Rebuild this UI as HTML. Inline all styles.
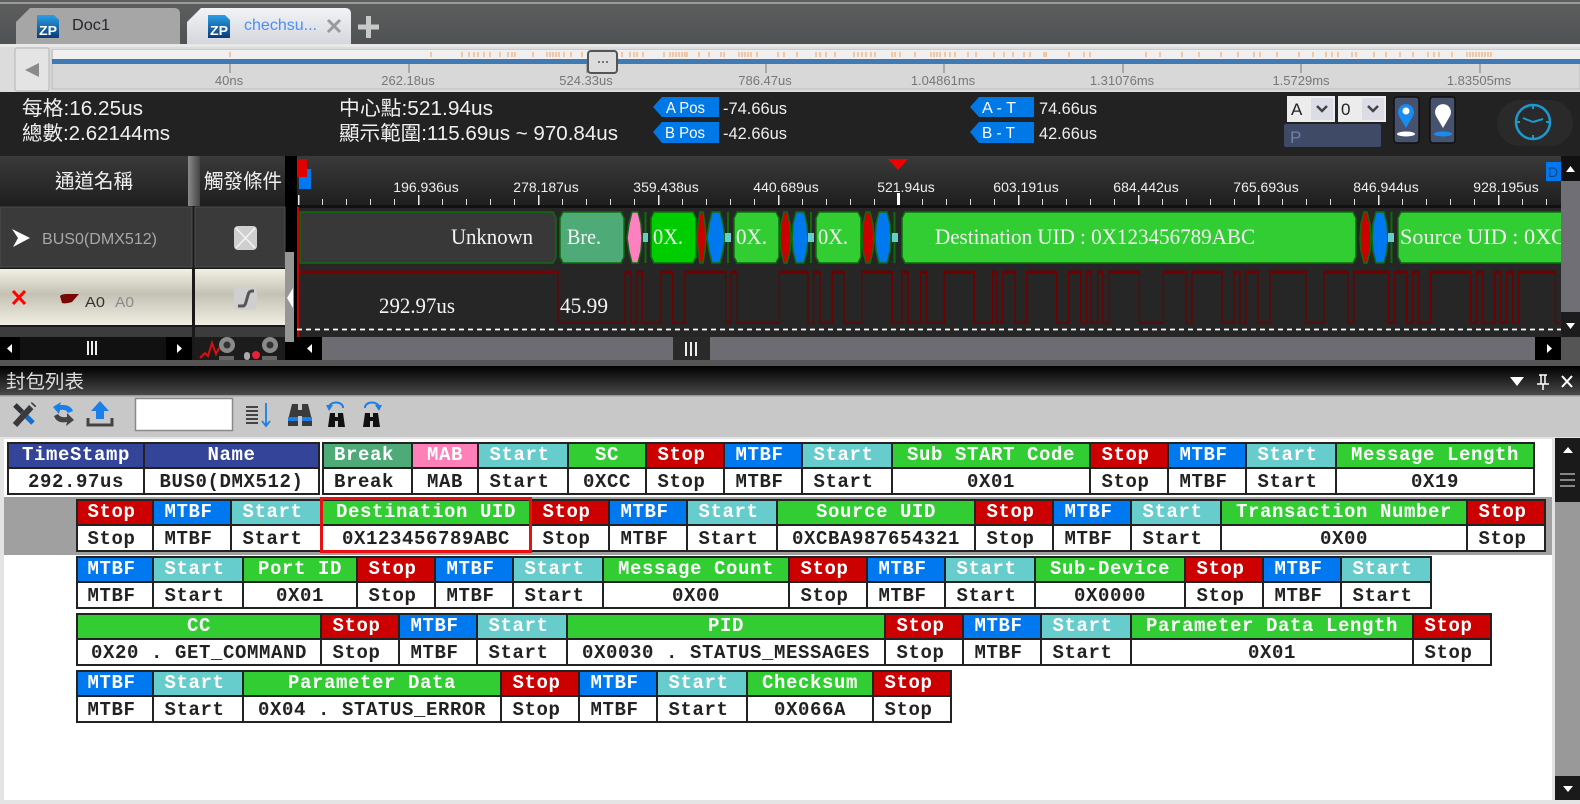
<!DOCTYPE html>
<html><head><meta charset="utf-8"><style>
html,body{margin:0;padding:0;width:1580px;height:804px;overflow:hidden;background:#fff}
svg{position:absolute;left:0;top:0}
text{font-family:"Liberation Sans","Noto Sans CJK TC",sans-serif}
.cn{font-size:20px;fill:#f0f0f0}
.se{font-family:"Liberation Serif",serif;font-size:22px;fill:#f4f4f4}
.ov{font-size:13px;fill:#777;text-anchor:middle}
.ru{font-size:14px;fill:#eee;text-anchor:middle}
.v{font-size:17px;fill:#eee}
.tg{font-size:16px;fill:#fff}
.row{position:absolute;height:53px;box-sizing:border-box;border:2px solid #222;border-right:0;font:bold 19px "Liberation Mono",monospace;letter-spacing:.6px;white-space:nowrap}
.c{float:left;height:49px;box-sizing:border-box;border-right:2px solid #222;background:#fff}
.c b,.c i{display:block;box-sizing:border-box;text-align:center;font-style:normal;font-weight:bold;height:24px;line-height:27px;color:#222}
.c b{height:25px;line-height:23px;border-bottom:2px solid #222;color:#fff}
.g{background:#32cd32}.r{background:#cc0000}.u{background:#0078f0}.t{background:#66cccc}.n{background:#334499}.k{background:#4eab78}.p{background:#ff80b8}
.c b.r,.c b.u,.c b.t,.c b.k,.c b.r+i,.c b.u+i,.c b.t+i,.c b.k+i{padding-right:7px}
</style></head><body>
<svg width="1580" height="804" viewBox="0 0 1580 804">
<defs>
<linearGradient id="top" x1="0" y1="0" x2="0" y2="1"><stop offset="0" stop-color="#5e5e5e"/><stop offset="1" stop-color="#4e5254"/></linearGradient>
<linearGradient id="tab" x1="0" y1="0" x2="0" y2="1"><stop offset="0" stop-color="#f2f3f6"/><stop offset="1" stop-color="#d4d6dc"/></linearGradient>
<linearGradient id="zp" x1="0" y1="0" x2="0" y2="1"><stop offset="0" stop-color="#2a9fe8"/><stop offset="1" stop-color="#0c3a7a"/></linearGradient>
<linearGradient id="hd" x1="0" y1="0" x2="0" y2="1"><stop offset="0" stop-color="#3a3a3a"/><stop offset="1" stop-color="#1e1e1e"/></linearGradient>
<linearGradient id="cream" x1="0" y1="0" x2="0" y2="1"><stop offset="0" stop-color="#f2f0e4"/><stop offset=".45" stop-color="#c4c2b4"/><stop offset="1" stop-color="#f0eee2"/></linearGradient>
<linearGradient id="pn" x1="0" y1="0" x2="0" y2="1"><stop offset="0" stop-color="#000"/><stop offset="1" stop-color="#4c4c4c"/></linearGradient>
<linearGradient id="spl" x1="0" y1="0" x2="1" y2="0"><stop offset="0" stop-color="#8a8a8a"/><stop offset="1" stop-color="#444"/></linearGradient>
<pattern id="mn" x="298" y="0" width="24" height="10" patternUnits="userSpaceOnUse"><rect width="1" height="10" fill="#ddd"/></pattern>
<pattern id="mj" x="298" y="0" width="120" height="14" patternUnits="userSpaceOnUse"><rect width="1.5" height="14" fill="#eee"/></pattern>
<clipPath id="bus"><rect x="297" y="208" width="1264" height="60"/></clipPath>
</defs>

<!-- title bar -->
<rect width="1580" height="46" fill="url(#top)"/>
<rect y="2" width="1580" height="2" fill="#9a9a9a"/>
<path d="M16 45V22L30 8H174Q180 8 180 14V45Z" fill="#a6a6a6"/>
<path d="M187 45V22L201 8H345Q351 8 351 14V45Z" fill="url(#tab)"/>
<path d="M37 15H54L59 20V38H37Z" fill="url(#zp)"/><text x="39" y="35" font-size="13" font-weight="bold" fill="#fff" textLength="18" lengthAdjust="spacingAndGlyphs">ZP</text>
<path d="M208 15H225L230 20V38H208Z" fill="url(#zp)"/><text x="210" y="35" font-size="13" font-weight="bold" fill="#fff" textLength="18" lengthAdjust="spacingAndGlyphs">ZP</text>
<text x="72" y="30" font-size="16" fill="#2a2430" textLength="38" lengthAdjust="spacingAndGlyphs">Doc1</text>
<text x="244" y="30" font-size="16" fill="#4a90f8" textLength="73" lengthAdjust="spacingAndGlyphs">chechsu...</text>
<path d="M328 20L340 32M340 20L328 32" stroke="#9a9a9a" stroke-width="3"/>
<path d="M368.500 16V38M358 27H379" stroke="#c8c8c8" stroke-width="5"/>

<!-- overview -->
<rect y="44" width="1580" height="49" fill="#dcdcdc"/>
<rect y="44" width="1580" height="3" fill="#e8e8e8"/>
<rect x="15" y="48" width="34" height="43" rx="2" fill="#e4e4e4" stroke="#b4b4b4"/>
<path d="M25 70L39 63V77Z" fill="#8a8a8a"/>
<rect x="52" y="50" width="1528" height="39" fill="#d8d8d8" stroke="#bbb"/>
<rect x="53" y="50" width="1527" height="9" fill="#f0f0f0"/>
<rect x="52" y="59" width="1528" height="5" fill="#3f7ab5"/>
<path d="M230 52v5M431 52v5M462 52v5M469 52v5M474 52v5M478 52v5M484 52v5M490 52v5M500 52v5M508 52v5M512 52v5M515 52v5M533 52v5M547 52v5M550 52v5M553 52v5M556 52v5M559 52v5M564 52v5M571 52v5M582 52v5M622 52v5M630 52v5M634 52v5M637 52v5M643 52v5M664 52v5M670 52v5M673 52v5M676 52v5M679 52v5M682 52v5M685 52v5M687 52v5M699 52v5M709 52v5M721 52v5M724 52v5M739 52v5M742 52v5M745 52v5M748 52v5M751 52v5M757 52v5M778 52v5M784 52v5M797 52v5M816 52v5M820 52v5M826 52v5M835 52v5M854 52v5M858 52v5M862 52v5M866 52v5M871 52v5M875 52v5M892 52v5M895 52v5M900 52v5M915 52v5M931 52v5M934 52v5M937 52v5M940 52v5M945 52v5M950 52v5M955 52v5M968 52v5M976 52v5M994 52v5M1004 52v5M1013 52v5M1024 52v5M1030 52v5M1044 52v5M1046 52v5M1069 52v5M1084 52v5M1090 52v5M1146 52v5M1160 52v5M1182 52v5M1199 52v5M1221 52v5M1238 52v5M1254 52v5M1260 52v5M1277 52v5M1299 52v5M1313 52v5M1326 52v5M1332 52v5M1338 52v5M1352 52v5M1356 52v5M1374 52v5M1386 52v5M1400 52v5M1413 52v5M1428 52v5M1434 52v5M1439 52v5M1452 52v5M1467 52v5M1470 52v5M1473 52v5M1476 52v5M1479 52v5M1482 52v5M1485 52v5M1488 52v5M1491 52v5" stroke="#f0a060" stroke-width="1"/>
<path d="M230 64v9M409 64v9M587 64v9M766 64v9M944 64v9M1123 64v9M1301 64v9M1480 64v9" stroke="#777"/>
<text class="ov" x="229" y="85">40ns</text><text class="ov" x="408" y="85">262.18us</text><text class="ov" x="586" y="85">524.33us</text><text class="ov" x="765" y="85">786.47us</text><text class="ov" x="943" y="85">1.04861ms</text><text class="ov" x="1122" y="85">1.31076ms</text><text class="ov" x="1301" y="85">1.5729ms</text><text class="ov" x="1479" y="85">1.83505ms</text>
<rect x="588" y="51" width="29" height="22" rx="3" fill="#dcdcdc" stroke="#555" stroke-width="2"/>
<path d="M598 62h2M602 62h2M606 62h2" stroke="#555" stroke-width="1.5"/>

<!-- info bar -->
<rect y="92" width="1580" height="64" fill="#222"/>
<text class="cn" x="22" y="115" textLength="121" lengthAdjust="spacingAndGlyphs">每格:16.25us</text>
<text class="cn" x="22" y="140" textLength="148" lengthAdjust="spacingAndGlyphs">總數:2.62144ms</text>
<text class="cn" x="339" y="115" textLength="154" lengthAdjust="spacingAndGlyphs">中心點:521.94us</text>
<text class="cn" x="339" y="140" textLength="279" lengthAdjust="spacingAndGlyphs">顯示範圍:115.69us ~ 970.84us</text>
<path d="M653 107L662 97H719V117H662Z" fill="#0078e6"/><path d="M653 132L662 122H719V143H662Z" fill="#0078e6"/>
<path d="M970 107L979 97H1034V117H979Z" fill="#0078e6"/><path d="M970 132L979 122H1034V143H979Z" fill="#0078e6"/>
<text class="tg" x="666" y="113" textLength="39" lengthAdjust="spacingAndGlyphs">A Pos</text>
<text class="tg" x="665" y="138" textLength="40" lengthAdjust="spacingAndGlyphs">B Pos</text>
<text class="tg" x="982" y="113" textLength="34" lengthAdjust="spacingAndGlyphs">A - T</text>
<text class="tg" x="982" y="138" textLength="33" lengthAdjust="spacingAndGlyphs">B - T</text>
<text class="v" x="723" y="114" textLength="64" lengthAdjust="spacingAndGlyphs">-74.66us</text>
<text class="v" x="723" y="139" textLength="64" lengthAdjust="spacingAndGlyphs">-42.66us</text>
<text class="v" x="1039" y="114" textLength="58" lengthAdjust="spacingAndGlyphs">74.66us</text>
<text class="v" x="1039" y="139" textLength="58" lengthAdjust="spacingAndGlyphs">42.66us</text>
<rect x="1287" y="96" width="48" height="26" fill="#ececec"/><rect x="1311" y="98" width="22" height="22" fill="#dcdce6"/>
<rect x="1338" y="96" width="48" height="26" fill="#ececec"/><rect x="1362" y="98" width="22" height="22" fill="#dcdce6"/>
<text x="1291" y="115" font-size="17" fill="#222">A</text><text x="1341" y="115" font-size="17" fill="#222">0</text>
<path d="M1317 106l5 5l5-5M1368 106l5 5l5-5" fill="none" stroke="#444" stroke-width="2.5"/>
<rect x="1284" y="124" width="97" height="23" rx="2" fill="#3e4a66"/>
<text x="1290" y="143" font-size="17" fill="#6d82a8">P</text>
<rect x="1394" y="97" width="25" height="46" rx="3" fill="#46526e" stroke="#101010" stroke-width="1.500"/>
<rect x="1430" y="97" width="25" height="46" rx="3" fill="#46526e" stroke="#101010" stroke-width="1.500"/>
<path d="M1406 128L1399 116A8 8 0 1 1 1413 116Z" fill="#1a8cf0"/><circle cx="1406" cy="111" r="3.500" fill="#fff"/><ellipse cx="1406" cy="134" rx="9" ry="2.500" fill="#fff"/>
<path d="M1443 128L1436 116A8 8 0 1 1 1450 116Z" fill="#fff"/><ellipse cx="1443" cy="134" rx="9" ry="2.500" fill="#1a8cf0"/>
<rect x="1497" y="100" width="76" height="46" rx="23" fill="#2a2a2a"/>
<circle cx="1533" cy="122" r="17" fill="none" stroke="#1c9ad0" stroke-width="2.5"/>
<path d="M1533 122L1523 118M1533 122L1543 119M1533 105v4M1533 135v4M1516 122h4M1546 122h4" stroke="#1c9ad0" stroke-width="2" fill="none"/>

<!-- channel header / ruler -->
<rect y="156" width="1580" height="51" fill="url(#hd)"/>
<rect x="188" y="156" width="12" height="50" fill="url(#spl)"/>
<text class="cn" x="55" y="188" textLength="78" lengthAdjust="spacingAndGlyphs">通道名稱</text>
<text class="cn" x="204" y="188" textLength="78" lengthAdjust="spacingAndGlyphs">觸發條件</text>
<rect x="285" y="156" width="12" height="204" fill="#000"/>
<rect x="298" y="199" width="1263" height="6" fill="url(#mn)"/>
<rect x="298" y="195" width="1263" height="11" fill="url(#mj)"/>
<rect x="897" y="193" width="3" height="13" fill="#fff"/>
<text class="ru" x="426" y="192">196.936us</text><text class="ru" x="546" y="192">278.187us</text><text class="ru" x="666" y="192">359.438us</text><text class="ru" x="786" y="192">440.689us</text><text class="ru" x="906" y="192">521.94us</text><text class="ru" x="1026" y="192">603.191us</text><text class="ru" x="1146" y="192">684.442us</text><text class="ru" x="1266" y="192">765.693us</text><text class="ru" x="1386" y="192">846.944us</text><text class="ru" x="1506" y="192">928.195us</text>
<path d="M888 159H908L898 170Z" fill="#f00000"/>
<rect x="299" y="169" width="12" height="20" fill="#0078f0"/><rect x="297" y="159" width="10" height="18" fill="#e00000"/>
<rect x="1546" y="162" width="15" height="19" fill="#0078f0"/><text x="1548" y="177" font-size="14" fill="#14407a">D</text>

<!-- wave bg -->
<rect x="297" y="207" width="1264" height="130" fill="#262626"/>
<rect x="297" y="205" width="1264" height="3" fill="#111"/>
<rect x="1561" y="156" width="19" height="25" fill="#111"/><path d="M1566 172h9l-4.500-6z" fill="#fff"/>
<rect x="1561" y="181" width="19" height="131" fill="#6f6f75"/>
<rect x="1561" y="312" width="19" height="25" fill="#1c1c1c"/><path d="M1566 323h9l-4.500 6z" fill="#fff"/>
<rect x="1561" y="337" width="19" height="23" fill="#555"/>

<!-- bus -->
<g clip-path="url(#bus)" stroke="#0b6e0b" stroke-width="1.5">
<path d="M300 212H553L556 218V257L553 263H300Z" fill="#383838"/>
<path d="M563 212H621L624 218V257L621 263H563L560 257V218Z" fill="#4eab78"/>
<path d="M632 212H638L641 224L642 238L641 251L638 263H632L629 251L627 238L629 224Z" fill="#ff80c0"/>
<path d="M654 212H693L696 218V257L693 263H654L651 257V218Z" fill="#00cd00"/>
<path d="M737 212H776L779 218V257L776 263H737L734 257V218Z" fill="#32cd32"/>
<path d="M819 212H858L861 218V257L858 263H819L816 257V218Z" fill="#32cd32"/>
<path d="M905 212H1353L1356 218V257L1353 263H905L902 257V218Z" fill="#32cd32"/>
<path d="M1401 212H1570V263H1401L1398 257V218Z" fill="#32cd32"/>
<path d="M700 212H703L705 224L706 238L705 251L703 263H700L698 251L697 238L698 224Z" fill="#cd0000"/>
<path d="M784 212H787L790 224L791 238L790 251L787 263H784L781 251L780 238L781 224Z" fill="#cd0000"/>
<path d="M866 212H870L873 224L874 238L873 251L870 263H866L863 251L862 238L863 224Z" fill="#cd0000"/>
<path d="M1364 212H1367L1370 224L1371 238L1370 251L1367 263H1364L1361 251L1360 238L1361 224Z" fill="#cd0000"/>
<path d="M712 212H720L723 224L725 238L723 251L720 263H712L709 251L707 238L709 224Z" fill="#0078f0"/>
<path d="M796 212H804L807 224L808 238L807 251L804 263H796L793 251L792 238L793 224Z" fill="#0078f0"/>
<path d="M879 212H887L890 224L891 238L890 251L887 263H879L876 251L875 238L876 224Z" fill="#0078f0"/>
<path d="M1376 212H1384L1387 224L1388 238L1387 251L1384 263H1376L1373 251L1372 238L1373 224Z" fill="#0078f0"/>
<path d="M645.500 212V263M728 212V263M811 212V263M894.500 212V263M1391.500 212V263" fill="none" stroke-width="2"/>
</g>
<path d="M643 233h5v9h-5zM725 233h6v9h-6zM808 233h6v9h-6zM892 233h6v9h-6zM1388 233h6v9h-6z" fill="#66cccc"/>
<text class="se" x="451" y="244" textLength="82" lengthAdjust="spacingAndGlyphs">Unknown</text>
<text class="se" x="567" y="244" textLength="34" lengthAdjust="spacingAndGlyphs">Bre.</text>
<text class="se" x="653" y="244" textLength="30" lengthAdjust="spacingAndGlyphs">0X.</text>
<text class="se" x="736" y="244" textLength="31" lengthAdjust="spacingAndGlyphs">0X.</text>
<text class="se" x="818" y="244" textLength="30" lengthAdjust="spacingAndGlyphs">0X.</text>
<text class="se" x="935" y="244" textLength="320" lengthAdjust="spacingAndGlyphs">Destination UID : 0X123456789ABC</text>
<g clip-path="url(#bus)"><text class="se" x="1400" y="244" textLength="166" lengthAdjust="spacingAndGlyphs">Source UID : 0XC</text></g>

<!-- digital wave -->
<path d="M298 272H558V323H625V272H631V323H637V272H642.300V323H661V272H672.700V323H685V272H725.700V323H731V272H737.300V323H779.300V272H808V323H813.700V272H820V323H832.300V272H844V323H861.700V272H892.300V323H902V272H908.300V323H920.700V272H926.700V323H944.300V272H974.300V323H992.700V272H996.700V323H1002.700V272H1015V323H1026.700V272H1056.700V323H1068.700V272H1080.700V323H1086.700V272H1091V323H1097.700V272H1102.800V323H1109.300V272H1139.300V323H1163.300V272H1186V323H1192V272H1222V323H1234V272H1240V323H1246V272H1258V323H1270V272H1306V323H1324V272H1348V323H1354V272H1388.700V323H1394.700V272H1406.700V323H1412.700V272H1418.700V323H1430.700V272H1470.700V323H1476.700V272H1482.700V323H1494.700V272H1500.700V323H1506.700V272H1512.700V323H1518.700V272H1555.300V323H1560" fill="none" stroke="#6e0000" stroke-width="1.300"/>
<path d="M298 272H558" stroke="#7a0000" stroke-width="3"/>
<path d="M625 272h6M637 272h5M661 272h11.700M685 272h40.700M731 272h6.300M779 272h29M814 272h6M832 272h12M862 272h30M902 272h6M921 272h6M944 272h30M993 272h4M1003 272h12M1027 272h30M1069 272h12M1087 272h4M1098 272h5M1109 272h30M1163 272h23M1192 272h30M1234 272h6M1246 272h12M1270 272h36M1324 272h24M1354 272h35M1395 272h12M1413 272h6M1431 272h40M1477 272h6M1495 272h6M1507 272h6M1519 272h36" stroke="#6e0000" stroke-width="3"/>
<rect x="297" y="207" width="2" height="130" fill="#c80000"/>
<path d="M297 329.500H1561" stroke="#fff" stroke-width="1.800" stroke-dasharray="5 4"/>
<text class="se" x="379" y="313" textLength="76" lengthAdjust="spacingAndGlyphs">292.97us</text>
<text class="se" x="560" y="313" textLength="48" lengthAdjust="spacingAndGlyphs">45.99</text>

<!-- channels -->
<rect y="206" width="285" height="154" fill="#1a1a1a"/>
<rect x="0" y="207" width="192" height="60" fill="#3a3a3a" stroke="#4c4c4c"/>
<rect x="195" y="207" width="90" height="60" fill="#3a3a3a" stroke="#4c4c4c"/>
<rect x="0" y="269" width="192" height="56" fill="url(#cream)"/>
<rect x="195" y="269" width="90" height="56" fill="url(#cream)"/>
<rect x="0" y="327" width="192" height="10" fill="#3c3c3c"/><rect x="195" y="327" width="90" height="10" fill="#3c3c3c"/>
<path d="M12 229L30 238L13 247L18 238Z" fill="#fff"/>
<text x="42" y="244" font-size="16" fill="#a8a8a8" textLength="115" lengthAdjust="spacingAndGlyphs">BUS0(DMX512)</text>
<rect x="234" y="226" width="23" height="24" rx="4" fill="#cfcfcf"/><path d="M236 228L255 248M255 228L236 248" stroke="#f4f4f4" stroke-width="1.500"/>
<path d="M13 291L25 304M25 291L13 304" stroke="#f00" stroke-width="3"/>
<path d="M60 296Q62 294 66 294H79L72 302Q66 304 62 303Z" fill="#780808"/>
<text x="85" y="307" font-size="15" fill="#333" textLength="20" lengthAdjust="spacingAndGlyphs">A0</text>
<text x="115" y="307" font-size="15" fill="#8a8a8a" textLength="19" lengthAdjust="spacingAndGlyphs">A0</text>
<rect x="234" y="287" width="23" height="23" rx="4" fill="#cfcfcf"/><path d="M238 306H243Q245 306 246 302L248 295Q249 291 252 291H254" fill="none" stroke="#555" stroke-width="3"/>
<rect x="285" y="252" width="9" height="90" fill="#969696"/>
<path d="M293 288V308L287 298Z" fill="#fff"/>
<rect y="337" width="192" height="23" fill="#111"/>
<rect y="337" width="20" height="23" fill="#000"/><rect x="166" y="337" width="26" height="23" fill="#000"/>
<path d="M7 348.500L12 344V353Z M182 348.500L177 344V353Z" fill="#fff"/>
<path d="M88 341v14M92 341v14M96 341v14" stroke="#eee" stroke-width="2"/>
<rect x="195" y="337" width="90" height="23" fill="#1c1c1c"/>
<path d="M200 358L205 353L208 356L212 343L216 354L219 348" fill="none" stroke="#d81010" stroke-width="2"/>
<circle cx="227" cy="345" r="8" fill="#8a8a8a"/><circle cx="227" cy="345" r="3.500" fill="#333"/><rect x="219" y="356" width="15" height="4" fill="#666"/>
<circle cx="270" cy="345" r="8" fill="#8a8a8a"/><circle cx="270" cy="345" r="3.500" fill="#333"/><rect x="262" y="356" width="15" height="4" fill="#666"/>
<rect x="244" y="352" width="6" height="8" rx="3" fill="#aaa"/><circle cx="256" cy="355" r="4" fill="#e8203a"/>

<!-- bottom scroll -->
<rect x="297" y="337" width="1264" height="23" fill="#6c6c72"/>
<rect x="297" y="337" width="25" height="23" fill="#000"/><path d="M307 348.500L312 344V353Z" fill="#fff"/>
<rect x="673" y="337" width="37" height="23" fill="#2a2a2a"/>
<path d="M686 342v14M691 342v14M696 342v14" stroke="#eee" stroke-width="2"/>
<rect x="1535" y="337" width="26" height="23" fill="#000"/><path d="M1552 348.500L1547 344V353Z" fill="#fff"/>
<rect y="360" width="1580" height="6" fill="#555"/>

<!-- panel header -->
<rect y="366" width="1580" height="30" fill="url(#pn)"/>
<text x="6" y="388" font-size="19" fill="#ddd" textLength="78" lengthAdjust="spacingAndGlyphs">封包列表</text>
<path d="M1510 377H1524L1517 386Z" fill="#fff"/>
<path d="M1539 375H1547M1541 375V384H1545V375M1537 384H1549M1543 384V390" fill="none" stroke="#fff" stroke-width="1.500"/>
<path d="M1562 376L1572 387M1572 376L1562 387" stroke="#fff" stroke-width="2"/>

<!-- toolbar -->
<rect y="396" width="1580" height="41" fill="#c8c8c8"/>
<rect y="395" width="1580" height="1.500" fill="#9a9a9a"/>
<path d="M15 405L33 423" stroke="#0f6fd8" stroke-width="5"/>
<path d="M15 405L22 412" stroke="#333" stroke-width="5"/>
<path d="M34 404L15 425" stroke="#3a3a3a" stroke-width="6"/>
<path d="M29 403L35 409" stroke="#c8c8c8" stroke-width="2.500"/>
<path d="M73 411Q70 404 60 405L61 402L53 407L59 414L60 410Q66 409 68 413Z" fill="#1a7fe8"/>
<path d="M54 416Q57 424 67 422L66 426L74 420L67 413L67 417Q60 418 58 414Z" fill="#444"/>
<path d="M100 401L109 411H104V419H96V411H91Z" fill="#1a7fe8"/>
<path d="M88 418V425H112V418" fill="none" stroke="#444" stroke-width="3"/>
<rect x="135.500" y="398.500" width="97" height="32" fill="#fff" stroke="#8a8a8a" stroke-width="1.500"/>
<path d="M246 407H258M246 411H258M246 415H258M246 419H258M246 423H258" stroke="#444" stroke-width="2"/>
<path d="M266 403V425M262 421L266 426L270 421" fill="none" stroke="#1a7fe8" stroke-width="1.800"/>
<path d="M292 404H298V410H302V404H308L312 420V426H302V416H298V426H288V420Z" fill="#3a3a3a"/>
<rect x="288" y="417" width="10" height="4" fill="#1a7fe8"/><rect x="302" y="417" width="10" height="4" fill="#1a7fe8"/>
<path d="M330 413H335V417H338V413H343L345 427H338V421H335V427H328Z" fill="#111"/>
<path d="M329 407A7 5 0 0 1 343 408" fill="none" stroke="#1a7fe8" stroke-width="2"/><path d="M326 405L333 405L329 411Z" fill="#1a7fe8"/>
<path d="M365 413H370V417H373V413H378L380 427H373V421H370V427H363Z" fill="#111"/>
<path d="M365 408A7 5 0 0 1 379 407" fill="none" stroke="#1a7fe8" stroke-width="2"/><path d="M382 405L375 405L379 411Z" fill="#1a7fe8"/>

<!-- list area -->
<rect y="437" width="1580" height="367" fill="#e4e4e4"/>
<rect x="4" y="439" width="1548" height="361" fill="#fff"/>
<rect x="4" y="497" width="1548" height="58" fill="#a0a0a0"/>
<rect x="1555" y="438" width="25" height="362" fill="#999"/>
<rect x="1555" y="438" width="25" height="64" fill="#1a1a1a"/>
<path d="M1563 453h10l-5-6z" fill="#fff"/>
<path d="M1560 474h15M1560 480h15M1560 486h15" stroke="#aaa" stroke-width="1.500"/>
<rect x="1555" y="776" width="25" height="24" fill="#1a1a1a"/>
<path d="M1563 786h10l-5 6z" fill="#fff"/>
</svg>

<div class="row" style="left:7px;top:442px"><div class="c" style="width:136px"><b class="n">TimeStamp</b><i>292.97us</i></div><div class="c" style="width:175px"><b class="n">Name</b><i>BUS0(DMX512)</i></div></div>
<div class="row" style="left:322px;top:442px"><div class="c" style="width:89px"><b class="k">Break</b><i>Break</i></div><div class="c" style="width:66px"><b class="p">MAB</b><i>MAB</i></div><div class="c" style="width:90px"><b class="t">Start</b><i>Start</i></div><div class="c" style="width:78px"><b class="g">SC</b><i>0XCC</i></div><div class="c" style="width:78px"><b class="r">Stop</b><i>Stop</i></div><div class="c" style="width:78px"><b class="u">MTBF</b><i>MTBF</i></div><div class="c" style="width:90px"><b class="t">Start</b><i>Start</i></div><div class="c" style="width:198px"><b class="g">Sub START Code</b><i>0X01</i></div><div class="c" style="width:78px"><b class="r">Stop</b><i>Stop</i></div><div class="c" style="width:78px"><b class="u">MTBF</b><i>MTBF</i></div><div class="c" style="width:90px"><b class="t">Start</b><i>Start</i></div><div class="c" style="width:198px"><b class="g">Message Length</b><i>0X19</i></div></div>

<div class="row" style="left:76px;top:499px"><div class="c" style="width:76px"><b class="r">Stop</b><i>Stop</i></div><div class="c" style="width:78px"><b class="u">MTBF</b><i>MTBF</i></div><div class="c" style="width:90px"><b class="t">Start</b><i>Start</i></div><div class="c" style="width:210px"><b class="g">Destination UID</b><i>0X123456789ABC</i></div><div class="c" style="width:78px"><b class="r">Stop</b><i>Stop</i></div><div class="c" style="width:78px"><b class="u">MTBF</b><i>MTBF</i></div><div class="c" style="width:90px"><b class="t">Start</b><i>Start</i></div><div class="c" style="width:198px"><b class="g">Source UID</b><i>0XCBA987654321</i></div><div class="c" style="width:78px"><b class="r">Stop</b><i>Stop</i></div><div class="c" style="width:78px"><b class="u">MTBF</b><i>MTBF</i></div><div class="c" style="width:90px"><b class="t">Start</b><i>Start</i></div><div class="c" style="width:246px"><b class="g">Transaction Number</b><i>0X00</i></div><div class="c" style="width:78px"><b class="r">Stop</b><i>Stop</i></div></div>
<div style="position:absolute;left:320px;top:497px;width:212px;height:56px;box-sizing:border-box;border:3px solid #e81010"></div>

<div class="row" style="left:76px;top:556px"><div class="c" style="width:76px"><b class="u">MTBF</b><i>MTBF</i></div><div class="c" style="width:90px"><b class="t">Start</b><i>Start</i></div><div class="c" style="width:114px"><b class="g">Port ID</b><i>0X01</i></div><div class="c" style="width:78px"><b class="r">Stop</b><i>Stop</i></div><div class="c" style="width:78px"><b class="u">MTBF</b><i>MTBF</i></div><div class="c" style="width:90px"><b class="t">Start</b><i>Start</i></div><div class="c" style="width:186px"><b class="g">Message Count</b><i>0X00</i></div><div class="c" style="width:78px"><b class="r">Stop</b><i>Stop</i></div><div class="c" style="width:78px"><b class="u">MTBF</b><i>MTBF</i></div><div class="c" style="width:90px"><b class="t">Start</b><i>Start</i></div><div class="c" style="width:150px"><b class="g">Sub-Device</b><i>0X0000</i></div><div class="c" style="width:78px"><b class="r">Stop</b><i>Stop</i></div><div class="c" style="width:78px"><b class="u">MTBF</b><i>MTBF</i></div><div class="c" style="width:90px"><b class="t">Start</b><i>Start</i></div></div>

<div class="row" style="left:76px;top:613px"><div class="c" style="width:244px"><b class="g">CC</b><i>0X20 . GET_COMMAND</i></div><div class="c" style="width:78px"><b class="r">Stop</b><i>Stop</i></div><div class="c" style="width:78px"><b class="u">MTBF</b><i>MTBF</i></div><div class="c" style="width:90px"><b class="t">Start</b><i>Start</i></div><div class="c" style="width:318px"><b class="g">PID</b><i>0X0030 . STATUS_MESSAGES</i></div><div class="c" style="width:78px"><b class="r">Stop</b><i>Stop</i></div><div class="c" style="width:78px"><b class="u">MTBF</b><i>MTBF</i></div><div class="c" style="width:90px"><b class="t">Start</b><i>Start</i></div><div class="c" style="width:282px"><b class="g">Parameter Data Length</b><i>0X01</i></div><div class="c" style="width:78px"><b class="r">Stop</b><i>Stop</i></div></div>

<div class="row" style="left:76px;top:670px"><div class="c" style="width:76px"><b class="u">MTBF</b><i>MTBF</i></div><div class="c" style="width:90px"><b class="t">Start</b><i>Start</i></div><div class="c" style="width:258px"><b class="g">Parameter Data</b><i>0X04 . STATUS_ERROR</i></div><div class="c" style="width:78px"><b class="r">Stop</b><i>Stop</i></div><div class="c" style="width:78px"><b class="u">MTBF</b><i>MTBF</i></div><div class="c" style="width:90px"><b class="t">Start</b><i>Start</i></div><div class="c" style="width:126px"><b class="g">Checksum</b><i>0X066A</i></div><div class="c" style="width:78px"><b class="r">Stop</b><i>Stop</i></div></div>
</body></html>
